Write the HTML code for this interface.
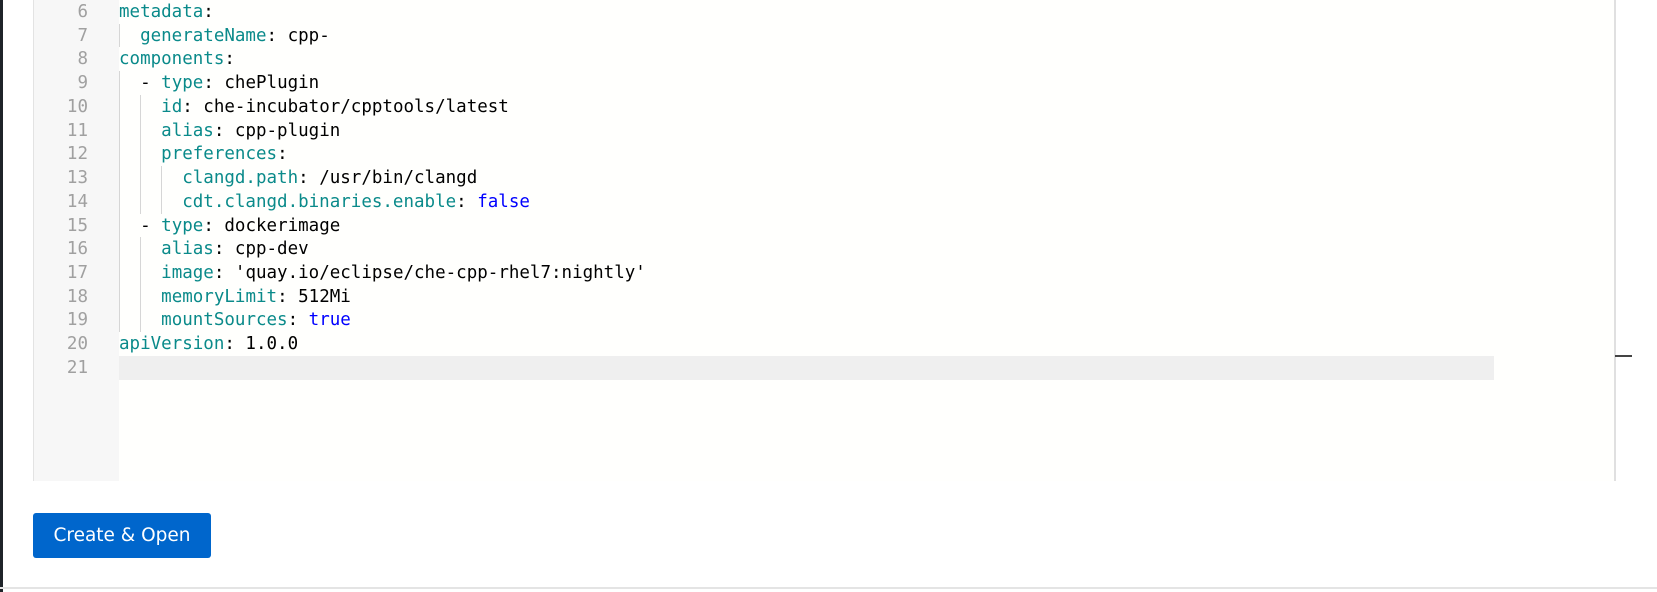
<!DOCTYPE html>
<html><head><meta charset="utf-8"><style>
html,body{margin:0;padding:0;background:#fff;width:1657px;height:592px;overflow:hidden;position:relative;font-family:"Liberation Sans",sans-serif}
.lb{position:absolute;left:0;top:0;width:3px;height:592px;background:#1f2329}
.gut{position:absolute;left:33px;top:0;width:86px;height:481px;background:#f7f7f7;border-left:1px solid #e3e3e3;box-sizing:border-box}
.ed{position:absolute;left:119px;top:0;width:1495px;height:481px;background:#fffffd;border-right:2px solid #e0e0e0;box-sizing:content-box}
.hl{position:absolute;left:119px;top:356px;width:1375px;height:24px;background:#efefef}
.ln{position:absolute;left:33px;width:55px;text-align:right;color:#a0a0a0;font:17.5px/23.73px "DejaVu Sans Mono",monospace;margin-top:1px}
.cl{position:absolute;left:119px;font:17.5px/23.73px "DejaVu Sans Mono",monospace;white-space:pre;color:#000;margin-top:1px}
.k{color:#0a8a8a}.b{color:#0000ff}
.g{position:absolute;width:1px;background:#d6d6d6}
.dash{position:absolute;left:1615px;top:355px;width:17px;height:2px;background:#444}
.bot{position:absolute;left:0;top:587px;width:1657px;height:2px;background:#e4e4e4}
.btn{position:absolute;left:33px;top:513px;width:178px;height:45px;background:#0066cc;border-radius:3px;color:#fff;font:18.5px/45px "DejaVu Sans",sans-serif;text-align:center}
</style></head><body>
<div class="lb"></div>
<div class="gut"></div>
<div class="ed"></div>
<div class="hl"></div>
<div class="dash"></div>
<div class="bot"></div>
<div class="btn">Create &amp; Open</div>

<div class="ln" style="top:0">6</div>
<div class="ln" style="top:23.73px">7</div>
<div class="ln" style="top:47.46px">8</div>
<div class="ln" style="top:71.19px">9</div>
<div class="ln" style="top:94.92px">10</div>
<div class="ln" style="top:118.65px">11</div>
<div class="ln" style="top:142.38px">12</div>
<div class="ln" style="top:166.11px">13</div>
<div class="ln" style="top:189.84px">14</div>
<div class="ln" style="top:213.57px">15</div>
<div class="ln" style="top:237.3px">16</div>
<div class="ln" style="top:261.03px">17</div>
<div class="ln" style="top:284.76px">18</div>
<div class="ln" style="top:308.49px">19</div>
<div class="ln" style="top:332.22px">20</div>
<div class="ln" style="top:355.95px">21</div>

<div class="g" style="left:119px;top:23.73px;height:23.73px"></div>
<div class="g" style="left:119px;top:71.19px;height:261.03px"></div>
<div class="g" style="left:140px;top:94.92px;height:118.65px"></div>
<div class="g" style="left:140px;top:237.3px;height:94.92px"></div>
<div class="g" style="left:161px;top:166.11px;height:47.46px"></div>

<div class="cl" style="top:0"><span class="k">metadata</span>:</div>
<div class="cl" style="top:23.73px">  <span class="k">generateName</span>: cpp-</div>
<div class="cl" style="top:47.46px"><span class="k">components</span>:</div>
<div class="cl" style="top:71.19px">  - <span class="k">type</span>: chePlugin</div>
<div class="cl" style="top:94.92px">    <span class="k">id</span>: che-incubator/cpptools/latest</div>
<div class="cl" style="top:118.65px">    <span class="k">alias</span>: cpp-plugin</div>
<div class="cl" style="top:142.38px">    <span class="k">preferences</span>:</div>
<div class="cl" style="top:166.11px">      <span class="k">clangd.path</span>: /usr/bin/clangd</div>
<div class="cl" style="top:189.84px">      <span class="k">cdt.clangd.binaries.enable</span>: <span class="b">false</span></div>
<div class="cl" style="top:213.57px">  - <span class="k">type</span>: dockerimage</div>
<div class="cl" style="top:237.3px">    <span class="k">alias</span>: cpp-dev</div>
<div class="cl" style="top:261.03px">    <span class="k">image</span>: 'quay.io/eclipse/che-cpp-rhel7:nightly'</div>
<div class="cl" style="top:284.76px">    <span class="k">memoryLimit</span>: 512Mi</div>
<div class="cl" style="top:308.49px">    <span class="k">mountSources</span>: <span class="b">true</span></div>
<div class="cl" style="top:332.22px"><span class="k">apiVersion</span>: 1.0.0</div>
</body></html>
